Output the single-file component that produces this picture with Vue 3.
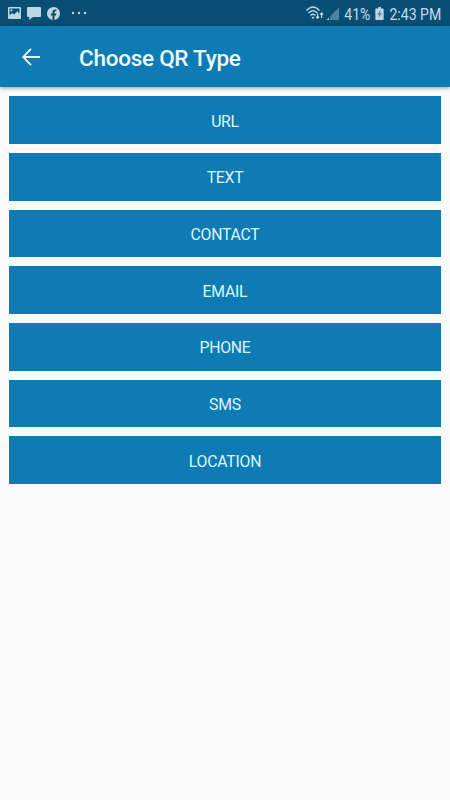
<script setup>
import { ref } from 'vue'

const types = ['URL', 'TEXT', 'CONTACT', 'EMAIL', 'PHONE', 'SMS', 'LOCATION']

const selected = ref('')

const choose = (type) => {
  selected.value = type
}
</script>

<template>
  <div class="screen">
    <div class="status-bar">
      <div class="notifications">
        <svg class="picture" viewBox="0 0 13 12">
          <path fill-rule="evenodd" d="M1 0h11a1 1 0 0 1 1 1v10a1 1 0 0 1-1 1H1a1 1 0 0 1-1-1V1a1 1 0 0 1 1-1zM1.500 1.500v6.800l2.700-2.200 2 1.500 3-3.400 2.300 2.500V1.500zM3.500 2.200a1.100 1.100 0 1 1 0 2.200a1.100 1.100 0 0 1 0-2.200z" />
        </svg>
        <svg class="chat" viewBox="0 0 14 13">
          <path d="M1 0h12a1 1 0 0 1 1 1v8a1 1 0 0 1-1 1H6L2.300 13V10H1a1 1 0 0 1-1-1V1a1 1 0 0 1 1-1z" />
        </svg>
        <svg class="facebook" viewBox="0 0 24 24">
          <path d="M24 12a12 12 0 1 0-13.900 11.900v-8.400H7.100V12h3V9.400c0-3 1.800-4.700 4.500-4.700 1.300 0 2.700.2 2.700.2v3h-1.500c-1.500 0-2 .9-2 1.900V12h3.400l-.5 3.500h-2.900v8.400A12 12 0 0 0 24 12z" />
        </svg>
        <svg class="more" viewBox="0 0 16 4">
          <circle cx="2" cy="2" r="1.200" />
          <circle cx="8" cy="2" r="1.200" />
          <circle cx="14" cy="2" r="1.200" />
        </svg>
      </div>
      <div class="system">
        <svg class="wifi" viewBox="0 0 18 14">
          <path class="line" d="M.5 4.600Q7-2.600 13.500 4.600M2.500 7.100q4.500-4.600 9 0M4.600 9.500q2.400-2.400 4.800 0" />
          <path d="M5.500 11.300q1.500-1.300 3 0L7 13z" />
          <path class="arrows" d="M11.600 7.500v4.800M10 10.700l1.600 1.700 1.600-1.700M15.600 12V7M14 8.700l1.600-1.700 1.600 1.700" />
        </svg>
        <svg class="signal" viewBox="0 0 14 14">
          <path class="faint" d="M13 .5v12.500H4.200V9.300z" />
          <path d="M.5 13L3 10.500V13z" />
        </svg>
        <span class="percent">41%</span>
        <svg class="battery" viewBox="0 0 9 14">
          <path d="M3 0h3v1.500h2a1 1 0 0 1 1 1V13a1 1 0 0 1-1 1H1a1 1 0 0 1-1-1V2.500a1 1 0 0 1 1-1h2z" />
          <path class="bolt" d="M5.600 3.300L2.200 8h2l-.7 3.500L7 6.700H5z" />
        </svg>
        <span class="time">2:43 PM</span>
      </div>
    </div>

    <header class="header">
      <button class="back" aria-label="Back">
        <svg viewBox="0 0 18 18">
          <path d="M9 .8L1.200 9 9 17.200M1.200 9H18" />
        </svg>
      </button>
      <h1 class="title">Choose QR Type</h1>
    </header>

    <main class="list">
      <button v-for="type in types" :key="type" class="type-btn" @click="choose(type)">
        {{ type }}
      </button>
    </main>
  </div>
</template>

<style>
body {
  margin: 0;
  background-color: #fafafa;
}
</style>

<style scoped>
.screen {
  display: flex;
  flex-direction: column;
  height: 100vh;
  overflow: hidden;
  background-color: #fafafa;
  font-family: Roboto, sans-serif;
}

.status-bar {
  display: flex;
  justify-content: space-between;
  align-items: center;
  box-sizing: border-box;
  height: 26px;
  padding: 0 9px 0 8px;
  background-color: #084e75;
  color: #c2dae7;
}

.notifications,
.system {
  display: flex;
  align-items: center;
}

.system {
  padding-top: 2px;
}

.status-bar svg {
  display: block;
  fill: #bcd6e4;
}

.picture {
  width: 13px;
  height: 12px;
}

.chat {
  width: 14px;
  height: 13px;
  margin: 1px 0 0 6px;
}

.facebook {
  width: 13px;
  height: 13px;
  margin: 1px 0 0 6px;
}

.more {
  width: 16px;
  height: 4px;
  margin-left: 11px;
}

.status-bar .wifi {
  width: 18px;
  height: 14px;
  margin-top: -2px;
}

.wifi .line,
.wifi .arrows {
  fill: none;
  stroke: #bcd6e4;
  stroke-width: 1.4;
}

.wifi .arrows {
  stroke-width: 1.2;
}

.signal {
  width: 14px;
  height: 14px;
  margin: -1px 0 0 2px;
}

.status-bar .signal .faint {
  fill: #4f829f;
}

.percent,
.time {
  padding-top: 1px;
  font-size: 16.400px;
  line-height: 24px;
  white-space: nowrap;
  /* squeezed to the narrow status bar lettering */
  transform: scaleX(0.86);
  transform-origin: right center;
}

.battery {
  width: 9px;
  height: 13px;
  margin: -1px -3px 0 4px;
}

.status-bar .battery .bolt {
  fill: #4f7f9a;
}

.header {
  display: flex;
  align-items: center;
  box-sizing: border-box;
  height: 61px;
  padding: 1px 22px 0;
  flex-shrink: 0;
  background-color: #0e7bb5;
  box-shadow: 0 1px 4px rgba(0, 0, 0, 0.4);
}

.back {
  width: 18px;
  height: 18px;
  padding: 0;
  border: none;
  background: transparent;
  cursor: pointer;
}

.back svg {
  display: block;
  width: 18px;
  height: 18px;
  fill: none;
  stroke: #e9fbff;
  stroke-width: 1.8;
}

.title {
  margin: 2px 0 0 39px;
  color: #e9fbff;
  font-size: 22.500px;
  font-weight: 500;
  line-height: 28px;
  letter-spacing: -0.26px;
}

.list {
  display: flex;
  flex-direction: column;
  gap: 8.870px;
  padding: 9.300px 9px;
}

.type-btn {
  height: 47.800px;
  padding: 2px 0 0;
  border: none;
  background-color: #0e7bb5;
  color: #dcf6fc;
  font-family: inherit;
  font-size: 15.800px;
  letter-spacing: -0.25px;
  text-align: center;
  cursor: pointer;
}
</style>
